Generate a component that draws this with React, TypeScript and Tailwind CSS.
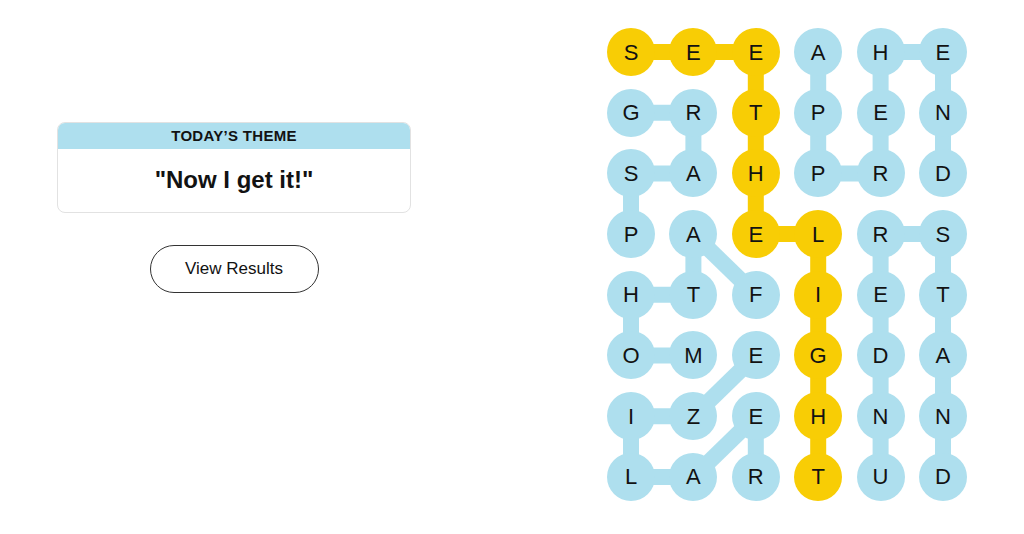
const LETTERS = [
  "SEEAHE",
  "GRTPEN",
  "SAHPRD",
  "PAELRS",
  "HTFIET",
  "OMEGDA",
  "IZEHNN",
  "LARTUD",
];

type Cell = [number, number];

// each found word as its path through the board, [row, col]
const WORDS: { path: Cell[]; spangram?: boolean }[] = [
  {
    path: [
      [0, 0], [0, 1], [0, 2], [1, 2], [2, 2], [3, 2],
      [3, 3], [4, 3], [5, 3], [6, 3], [7, 3],
    ],
    spangram: true,
  },
  { path: [[1, 0], [1, 1], [2, 1], [2, 0], [3, 0]] },
  { path: [[0, 3], [1, 3], [2, 3], [2, 4], [1, 4], [0, 4], [0, 5], [1, 5], [2, 5]] },
  { path: [[4, 2], [3, 1], [4, 1], [4, 0], [5, 0], [5, 1]] },
  { path: [[7, 2], [6, 2], [7, 1], [7, 0], [6, 0], [6, 1], [5, 2]] },
  {
    path: [
      [7, 4], [6, 4], [5, 4], [4, 4], [3, 4],
      [3, 5], [4, 5], [5, 5], [6, 5], [7, 5],
    ],
  },
];

const SIZE = 48;
const PITCH_X = 62.4;
const PITCH_Y = 60.7;
const BLUE = "#aedfee";
const YELLOW = "#f8cd05";

const center = ([r, c]: Cell) => ({ x: SIZE / 2 + c * PITCH_X, y: SIZE / 2 + r * PITCH_Y });

const spanCells = new Set(
  WORDS.filter((w) => w.spangram).flatMap((w) => w.path.map(([r, c]) => `${r}-${c}`)),
);

function Board() {
  const width = SIZE + 5 * PITCH_X;
  const height = SIZE + 7 * PITCH_Y;
  return (
    <div className="relative">
      <svg className="absolute inset-0" width={width} height={height}>
        {WORDS.map((w, wi) =>
          w.path.slice(1).map((cell, i) => {
            const a = center(w.path[i]);
            const b = center(cell);
            return (
              <line
                key={`${wi}-${i}`}
                x1={a.x}
                y1={a.y}
                x2={b.x}
                y2={b.y}
                stroke={w.spangram ? YELLOW : BLUE}
                strokeWidth={16}
              />
            );
          }),
        )}
      </svg>
      <div className="relative grid grid-cols-[repeat(6,48px)] gap-x-[14.4px] gap-y-[12.7px]">
        {LETTERS.flatMap((row, r) =>
          row.split("").map((ch, c) => (
            <div
              key={`${r}-${c}`}
              className={`w-12 h-12 rounded-full flex items-center justify-center text-[22px] text-[#121212] ${
                spanCells.has(`${r}-${c}`) ? "bg-[#f8cd05]" : "bg-[#aedfee]"
              }`}
            >
              {ch}
            </div>
          )),
        )}
      </div>
    </div>
  );
}

export default function App() {
  return (
    <div
      className="w-[1024px] h-[534px] bg-white flex"
      style={{ fontFamily: '"Liberation Sans", Arial, sans-serif' }}
    >
      <div className="pl-[57px] pt-[122px] w-[411px] flex flex-col items-center">
        <div className="w-[354px] h-[91px] rounded-lg border border-[#e2e2e2] overflow-hidden flex flex-col">
          <div className="h-[26px] bg-[#aedfee] flex items-center justify-center text-[15px] font-bold tracking-[0.3px] text-[#121212]">
            TODAY’S THEME
          </div>
          <div className="flex-1 flex items-center justify-center pb-[2px] text-[24px] font-bold text-[#121212]">
            "Now I get it!"
          </div>
        </div>
        <button
          type="button"
          className="mt-[32px] w-[169px] h-[48px] rounded-full border border-[#333] text-[17px] text-[#121212] flex items-center justify-center"
        >
          View Results
        </button>
      </div>
      <div className="ml-[196px] pt-[28px]">
        <Board />
      </div>
    </div>
  );
}
